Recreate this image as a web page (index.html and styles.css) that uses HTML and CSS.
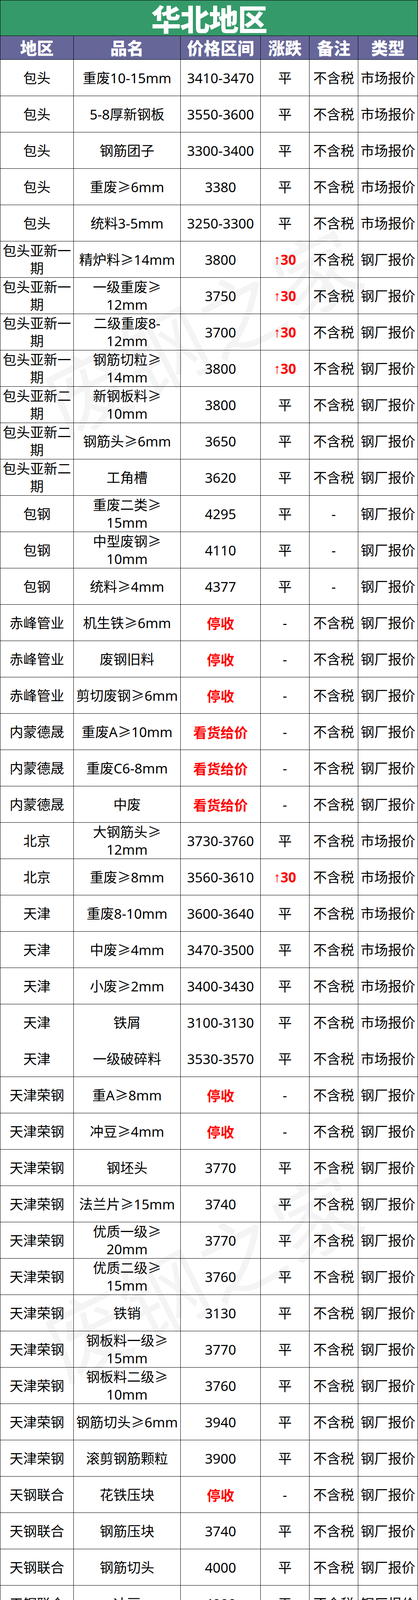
FILE: index.html
```html
<!DOCTYPE html>
<html lang="zh-CN">
<head>
<meta charset="utf-8">
<title>华北地区</title>
<link rel="stylesheet" href="styles.css">
</head>
<body>
<div class="sheet">
  <div class="title"><span class="title-text">华北地区</span></div>
  <div class="grid">
    <div class="c h">地区</div><div class="c h">品名</div><div class="c h">价格区间</div><div class="c h">涨跌</div><div class="c h">备注</div><div class="c h">类型</div>

    <div class="c">包头</div><div class="c">重废10-15mm</div><div class="c">3410-3470</div><div class="c">平</div><div class="c">不含税</div><div class="c">市场报价</div>
    <div class="c">包头</div><div class="c">5-8厚新钢板</div><div class="c">3550-3600</div><div class="c">平</div><div class="c">不含税</div><div class="c">市场报价</div>
    <div class="c">包头</div><div class="c">钢筋团子</div><div class="c">3300-3400</div><div class="c">平</div><div class="c">不含税</div><div class="c">市场报价</div>
    <div class="c">包头</div><div class="c">重废≥6mm</div><div class="c">3380</div><div class="c">平</div><div class="c">不含税</div><div class="c">市场报价</div>
    <div class="c">包头</div><div class="c">统料3-5mm</div><div class="c">3250-3300</div><div class="c">平</div><div class="c">不含税</div><div class="c">市场报价</div>

    <div class="c">包头亚新一<br>期</div><div class="c">精炉料≥14mm</div><div class="c">3800</div><div class="c up"><span class="ar">↑</span>30</div><div class="c">不含税</div><div class="c">钢厂报价</div>
    <div class="c">包头亚新一<br>期</div><div class="c">一级重废≥<br>12mm</div><div class="c">3750</div><div class="c up"><span class="ar">↑</span>30</div><div class="c">不含税</div><div class="c">钢厂报价</div>
    <div class="c">包头亚新一<br>期</div><div class="c">二级重废8-<br>12mm</div><div class="c">3700</div><div class="c up"><span class="ar">↑</span>30</div><div class="c">不含税</div><div class="c">钢厂报价</div>
    <div class="c">包头亚新一<br>期</div><div class="c">钢筋切粒≥<br>14mm</div><div class="c">3800</div><div class="c up"><span class="ar">↑</span>30</div><div class="c">不含税</div><div class="c">钢厂报价</div>
    <div class="c">包头亚新二<br>期</div><div class="c">新钢板料≥<br>10mm</div><div class="c">3800</div><div class="c">平</div><div class="c">不含税</div><div class="c">钢厂报价</div>
    <div class="c">包头亚新二<br>期</div><div class="c">钢筋头≥6mm</div><div class="c">3650</div><div class="c">平</div><div class="c">不含税</div><div class="c">钢厂报价</div>
    <div class="c">包头亚新二<br>期</div><div class="c">工角槽</div><div class="c">3620</div><div class="c">平</div><div class="c">不含税</div><div class="c">钢厂报价</div>

    <div class="c">包钢</div><div class="c">重废二类≥<br>15mm</div><div class="c">4295</div><div class="c">平</div><div class="c">-</div><div class="c">钢厂报价</div>
    <div class="c">包钢</div><div class="c">中型废钢≥<br>10mm</div><div class="c">4110</div><div class="c">平</div><div class="c">-</div><div class="c">钢厂报价</div>
    <div class="c">包钢</div><div class="c">统料≥4mm</div><div class="c">4377</div><div class="c">平</div><div class="c">-</div><div class="c">钢厂报价</div>

    <div class="c">赤峰管业</div><div class="c">机生铁≥6mm</div><div class="c red">停收</div><div class="c">-</div><div class="c">不含税</div><div class="c">钢厂报价</div>
    <div class="c">赤峰管业</div><div class="c">废钢旧料</div><div class="c red">停收</div><div class="c">-</div><div class="c">不含税</div><div class="c">钢厂报价</div>
    <div class="c">赤峰管业</div><div class="c">剪切废钢≥6mm</div><div class="c red">停收</div><div class="c">-</div><div class="c">不含税</div><div class="c">钢厂报价</div>

    <div class="c">内蒙德晟</div><div class="c">重废A≥10mm</div><div class="c red">看货给价</div><div class="c">-</div><div class="c">不含税</div><div class="c">钢厂报价</div>
    <div class="c">内蒙德晟</div><div class="c">重废C6-8mm</div><div class="c red">看货给价</div><div class="c">-</div><div class="c">不含税</div><div class="c">钢厂报价</div>
    <div class="c">内蒙德晟</div><div class="c">中废</div><div class="c red">看货给价</div><div class="c">-</div><div class="c">不含税</div><div class="c">钢厂报价</div>

    <div class="c">北京</div><div class="c">大钢筋头≥<br>12mm</div><div class="c">3730-3760</div><div class="c">平</div><div class="c">不含税</div><div class="c">市场报价</div>
    <div class="c">北京</div><div class="c">重废≥8mm</div><div class="c">3560-3610</div><div class="c up"><span class="ar">↑</span>30</div><div class="c">不含税</div><div class="c">市场报价</div>

    <div class="c">天津</div><div class="c">重废8-10mm</div><div class="c">3600-3640</div><div class="c">平</div><div class="c">不含税</div><div class="c">市场报价</div>
    <div class="c">天津</div><div class="c">中废≥4mm</div><div class="c">3470-3500</div><div class="c">平</div><div class="c">不含税</div><div class="c">市场报价</div>
    <div class="c">天津</div><div class="c">小废≥2mm</div><div class="c">3400-3430</div><div class="c">平</div><div class="c">不含税</div><div class="c">市场报价</div>
    <div class="c nob">天津</div><div class="c nob">铁屑</div><div class="c nob">3100-3130</div><div class="c nob">平</div><div class="c nob">不含税</div><div class="c nob">市场报价</div>
    <div class="c">天津</div><div class="c">一级破碎料</div><div class="c">3530-3570</div><div class="c">平</div><div class="c">不含税</div><div class="c">市场报价</div>

    <div class="c">天津荣钢</div><div class="c">重A≥8mm</div><div class="c red">停收</div><div class="c">-</div><div class="c">不含税</div><div class="c">钢厂报价</div>
    <div class="c">天津荣钢</div><div class="c">冲豆≥4mm</div><div class="c red">停收</div><div class="c">-</div><div class="c">不含税</div><div class="c">钢厂报价</div>
    <div class="c">天津荣钢</div><div class="c">钢坯头</div><div class="c">3770</div><div class="c">平</div><div class="c">不含税</div><div class="c">钢厂报价</div>
    <div class="c">天津荣钢</div><div class="c">法兰片≥15mm</div><div class="c">3740</div><div class="c">平</div><div class="c">不含税</div><div class="c">钢厂报价</div>
    <div class="c">天津荣钢</div><div class="c">优质一级≥<br>20mm</div><div class="c">3770</div><div class="c">平</div><div class="c">不含税</div><div class="c">钢厂报价</div>
    <div class="c">天津荣钢</div><div class="c">优质二级≥<br>15mm</div><div class="c">3760</div><div class="c">平</div><div class="c">不含税</div><div class="c">钢厂报价</div>
    <div class="c">天津荣钢</div><div class="c">铁销</div><div class="c">3130</div><div class="c">平</div><div class="c">不含税</div><div class="c">钢厂报价</div>
    <div class="c">天津荣钢</div><div class="c">钢板料一级≥<br>15mm</div><div class="c">3770</div><div class="c">平</div><div class="c">不含税</div><div class="c">钢厂报价</div>
    <div class="c">天津荣钢</div><div class="c">钢板料二级≥<br>10mm</div><div class="c">3760</div><div class="c">平</div><div class="c">不含税</div><div class="c">钢厂报价</div>
    <div class="c">天津荣钢</div><div class="c">钢筋切头≥6mm</div><div class="c">3940</div><div class="c">平</div><div class="c">不含税</div><div class="c">钢厂报价</div>
    <div class="c">天津荣钢</div><div class="c">滚剪钢筋颗粒</div><div class="c">3900</div><div class="c">平</div><div class="c">不含税</div><div class="c">钢厂报价</div>

    <div class="c">天钢联合</div><div class="c">花铁压块</div><div class="c red">停收</div><div class="c">-</div><div class="c">不含税</div><div class="c">钢厂报价</div>
    <div class="c">天钢联合</div><div class="c">钢筋压块</div><div class="c">3740</div><div class="c">平</div><div class="c">不含税</div><div class="c">钢厂报价</div>
    <div class="c">天钢联合</div><div class="c">钢筋切头</div><div class="c">4000</div><div class="c">平</div><div class="c">不含税</div><div class="c">钢厂报价</div>
    <div class="c">天钢联合</div><div class="c">冲豆</div><div class="c">4000</div><div class="c">平</div><div class="c">不含税</div><div class="c">钢厂报价</div>

    <div class="c">临汾</div><div class="c">重废≥6mm</div><div class="c">3580-3680</div><div class="c">平</div><div class="c">不含税</div><div class="c">市场报价</div>
    <div class="c">临汾</div><div class="c">中废≥4mm</div><div class="c">3150-3200</div><div class="c">平</div><div class="c">不含税</div><div class="c">市场报价</div>
    <div class="c">临汾</div><div class="c">钢筋头≥10mm</div><div class="c">3800-3900</div><div class="c">平</div><div class="c">不含税</div><div class="c">市场报价</div>
    <div class="c">临汾</div><div class="c">剪切料1-3mm</div><div class="c">3000-3100</div><div class="c">平</div><div class="c">不含税</div><div class="c">市场报价</div>
    <div class="c">临汾</div><div class="c">重废≥10mm</div><div class="c">3690-3790</div><div class="c">平</div><div class="c">不含税</div><div class="c">市场报价</div>
    <div class="c">临汾</div><div class="c">乱钢筋</div><div class="c">3150-3250</div><div class="c">平</div><div class="c">不含税</div><div class="c">市场报价</div>
    <div class="c">临汾</div><div class="c">棉花包</div><div class="c">2700-2800</div><div class="c">平</div><div class="c">不含税</div><div class="c">市场报价</div>

    <div class="c">临汾建邦</div><div class="c">重型一级≥<br>10mm</div><div class="c">3810</div><div class="c">平</div><div class="c">不含税</div><div class="c">钢厂报价</div>
    <div class="c">临汾建邦</div><div class="c">重型6-10mm</div><div class="c">3750</div><div class="c">平</div><div class="c">不含税</div><div class="c">钢厂报价</div>
    <div class="c">临汾建邦</div><div class="c">特级重废≥<br>15mm</div><div class="c">3850</div><div class="c">平</div><div class="c">不含税</div><div class="c">钢厂报价</div>

    <div class="c">临汾新金山</div><div class="c">特级料</div><div class="c">3870-3900</div><div class="c">平</div><div class="c">不含税</div><div class="c">钢厂报价</div>
    <div class="c">临汾新金山</div><div class="c">一级料6-10mm</div><div class="c">3780</div><div class="c">平</div><div class="c">不含税</div><div class="c">钢厂报价</div>
    <div class="c">临汾新金山</div><div class="c">钢筋切头≥<br>12mm</div><div class="c">3930</div><div class="c">平</div><div class="c">不含税</div><div class="c">钢厂报价</div>

    <div class="c">临汾星原</div><div class="c">钢筋头6-10mm</div><div class="c">3670</div><div class="c">平</div><div class="c">不含税</div><div class="c">钢厂报价</div>
    <div class="c">临汾星原</div><div class="c">钢筋头16mm</div><div class="c">3740</div><div class="c">平</div><div class="c">不含税</div><div class="c">钢厂报价</div>
    <div class="c">临汾星原</div><div class="c">钢板料6-10mm</div><div class="c">3650</div><div class="c">平</div><div class="c">不含税</div><div class="c">钢厂报价</div>
    <div class="c">临汾星原</div><div class="c">钢板料</div><div class="c">3720</div><div class="c">平</div><div class="c">不含税</div><div class="c">钢厂报价</div>
    <div class="c">临汾星原</div><div class="c">钢板料14-<br>16mm</div><div class="c">3770</div><div class="c">平</div><div class="c">不含税</div><div class="c">钢厂报价</div>

    <div class="c">华翔铸造</div><div class="c">通料一级≥6mm</div><div class="c red">看货给价</div><div class="c">-</div><div class="c">含税</div><div class="c">钢厂报价</div>
    <div class="c">华翔铸造</div><div class="c">通料二级≥4mm</div><div class="c red">看货给价</div><div class="c">-</div><div class="c">含税</div><div class="c">钢厂报价</div>
    <div class="c">华翔铸造</div><div class="c">机生铁</div><div class="c red">看货给价</div><div class="c">-</div><div class="c">含税</div><div class="c">钢厂报价</div>

    <div class="c">吕梁</div><div class="c">重废≥6mm</div><div class="c">3550-3650</div><div class="c">平</div><div class="c">不含税</div><div class="c">市场报价</div>
    <div class="c">吕梁</div><div class="c">钢筋头</div><div class="c">3600-3700</div><div class="c">平</div><div class="c">不含税</div><div class="c">市场报价</div>
    <div class="c">吕梁</div><div class="c">中废</div><div class="c">3520-3570</div><div class="c">平</div><div class="c">不含税</div><div class="c">市场报价</div>
    <div class="c">吕梁</div><div class="c">重废≥10mm</div><div class="c">3670-3720</div><div class="c">平</div><div class="c">不含税</div><div class="c">市场报价</div>
    <div class="c">吕梁</div><div class="c">钢筋切头</div><div class="c">3830-3880</div><div class="c">平</div><div class="c">不含税</div><div class="c">市场报价</div>

    <div class="c">大同</div><div class="c">重废≥15mm</div><div class="c">3580-3630</div><div class="c">平</div><div class="c">不含税</div><div class="c">市场报价</div>
    <div class="c">大同</div><div class="c">重废≥10mm</div><div class="c">3500-3550</div><div class="c">平</div><div class="c">不含税</div><div class="c">市场报价</div>
    <div class="c">大同</div><div class="c">重废≥6mm</div><div class="c">3400-3450</div><div class="c">平</div><div class="c">不含税</div><div class="c">市场报价</div>
    <div class="c">大同</div><div class="c">剪切料</div><div class="c">3000-3100</div><div class="c">平</div><div class="c">不含税</div><div class="c">市场报价</div>
  </div>
  <div class="wm wm1">废钢之家</div>
  <div class="wm wm2">废钢之家</div>
  <div class="wm wm3">废钢之家</div>
</div>
</body>
</html>
```

FILE: styles.css
```css
html, body {
  margin: 0;
  padding: 0;
  background: #ffffff;
}
body {
  font-family: "Noto Sans", "Noto Sans CJK SC", sans-serif;
  color: #000000;
}
.sheet {
  position: relative;
  width: 1071px;
  height: 6943px;
  overflow: hidden;
}
.title {
  box-sizing: border-box;
  height: 92px;
  background: #349a69;
  border: 1px solid #000;
  color: #ffffff;
  display: flex;
  align-items: center;
  justify-content: center;
}
.title-text {
  font-family: "Noto Sans CJK SC", sans-serif;
  font-size: 76px;
  font-weight: 900;
  line-height: 1;
  letter-spacing: -2px;
}
.grid {
  display: grid;
  grid-template-columns: 189px 274px 205px 125px 125px 153px;
  grid-template-rows: 61px;
  grid-auto-rows: 93px;
}
.c {
  box-sizing: border-box;
  border-right: 1px solid #000;
  border-bottom: 1px solid #000;
  display: flex;
  align-items: center;
  justify-content: center;
  text-align: center;
  font-size: 35px;
  line-height: 45px;
  white-space: nowrap;
  overflow: hidden;
}
.c:nth-child(6n+1) {
  border-left: 1px solid #000;
}
.c.nob {
  border-bottom: none;
}
.h {
  background: #666699;
  color: #ffffff;
  font-family: "Noto Sans CJK SC", sans-serif;
  font-size: 43px;
  font-weight: 900;
  line-height: 1.2;
}
.red {
  color: #ff0000;
  font-weight: 700;
  font-family: "Noto Sans CJK SC", sans-serif;
}
.up {
  color: #ff0000;
  font-weight: 700;
}
.ar {
  font-family: "Liberation Sans", sans-serif;
  font-weight: 400;
}
.wm {
  position: absolute;
  left: 515px;
  transform: translate(-50%, -50%) rotate(-27deg);
  font-family: "Noto Sans CJK SC", sans-serif;
  font-size: 215px;
  letter-spacing: 5px;
  color: rgba(0, 0, 0, 0.045);
  white-space: nowrap;
  pointer-events: none;
  line-height: 1;
}
.wm1 { top: 840px; }
.wm2 { top: 3255px; }
.wm3 { top: 5665px; }
```
